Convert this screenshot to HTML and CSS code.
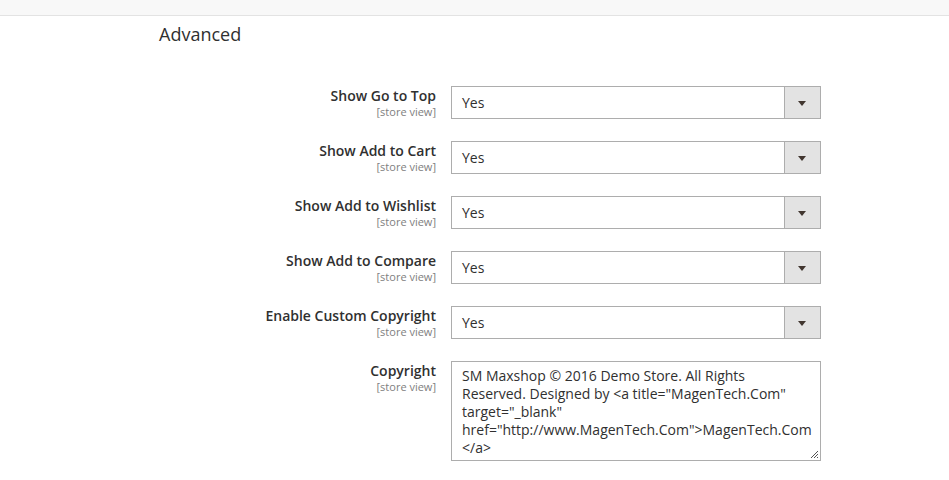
FILE: index.html
```html
<!DOCTYPE html>
<html>
<head>
<meta charset="utf-8">
<link rel="stylesheet" href="styles.css">
</head>
<body>
<div class="topbar"></div>
<div class="section">
  <h2 class="title">Advanced</h2>
  <div class="form">
    <div class="row">
      <div class="label"><span class="name">Show Go to Top</span><span class="scope">[store view]</span></div>
      <div class="select"><span class="value">Yes</span><span class="arrow"></span></div>
    </div>
    <div class="row">
      <div class="label"><span class="name">Show Add to Cart</span><span class="scope">[store view]</span></div>
      <div class="select"><span class="value">Yes</span><span class="arrow"></span></div>
    </div>
    <div class="row">
      <div class="label"><span class="name">Show Add to Wishlist</span><span class="scope">[store view]</span></div>
      <div class="select"><span class="value">Yes</span><span class="arrow"></span></div>
    </div>
    <div class="row">
      <div class="label"><span class="name">Show Add to Compare</span><span class="scope">[store view]</span></div>
      <div class="select"><span class="value">Yes</span><span class="arrow"></span></div>
    </div>
    <div class="row">
      <div class="label"><span class="name">Enable Custom Copyright</span><span class="scope">[store view]</span></div>
      <div class="select"><span class="value">Yes</span><span class="arrow"></span></div>
    </div>
    <div class="row">
      <div class="label"><span class="name">Copyright</span><span class="scope">[store view]</span></div>
      <div class="textarea">SM Maxshop © 2016 Demo Store. All Rights Reserved. Designed by &lt;a title="MagenTech.Com" target="_blank" href="http://www.MagenTech.Com"&gt;MagenTech.Com &lt;/a&gt;<svg class="grip" width="10" height="10" viewBox="0 0 10 10"><path d="M9 2 L2 9 M9 5 L5 9 M9 8 L8 9" stroke="#555" stroke-width="1" fill="none"/></svg></div>
    </div>
  </div>
</div>
</body>
</html>
```
FILE: styles.css
```css
html, body {
  margin: 0;
  padding: 0;
  background: #fff;
  font-family: "Open Sans", "Liberation Sans", sans-serif;
  color: #303030;
}
.topbar {
  height: 15px;
  background: #f8f8f8;
  border-bottom: 1px solid #e3e3e3;
}
.section {
  padding-left: 159px;
}
.title {
  margin: 0;
  padding-top: 6px;
  font-size: 18px;
  font-weight: 400;
  line-height: 24px;
  color: #303030;
}
.form {
  padding-top: 40px;
  display: flex;
  flex-direction: column;
  gap: 22px;
}
.row {
  display: grid;
  grid-template-columns: 277px 370px;
  column-gap: 15px;
  align-items: start;
}
.label {
  display: flex;
  flex-direction: column;
  align-items: flex-end;
  text-align: right;
}
.name {
  font-size: 14px;
  font-weight: 600;
  line-height: 19px;
  color: #303030;
}
.scope {
  font-size: 11px;
  line-height: 13px;
  color: #808080;
}
.select {
  box-sizing: border-box;
  height: 33px;
  border: 1px solid #adadad;
  display: flex;
  align-items: stretch;
  background: #fff;
}
.value {
  flex: 1;
  padding-left: 10px;
  font-size: 14px;
  line-height: 31px;
  color: #303030;
}
.arrow {
  width: 35px;
  background: #e3e3e3;
  border-left: 1px solid #adadad;
  position: relative;
}
.arrow::after {
  content: "";
  position: absolute;
  left: 13px;
  top: 14px;
  border-left: 4px solid transparent;
  border-right: 4px solid transparent;
  border-top: 5px solid #41362f;
}
.textarea {
  position: relative;
  box-sizing: border-box;
  height: 100px;
  border: 1px solid #adadad;
  padding: 5px 10px 0 10px;
  font-size: 14px;
  line-height: 18px;
  color: #303030;
  overflow: hidden;
}
.grip {
  position: absolute;
  right: 1px;
  bottom: 1px;
}
```
